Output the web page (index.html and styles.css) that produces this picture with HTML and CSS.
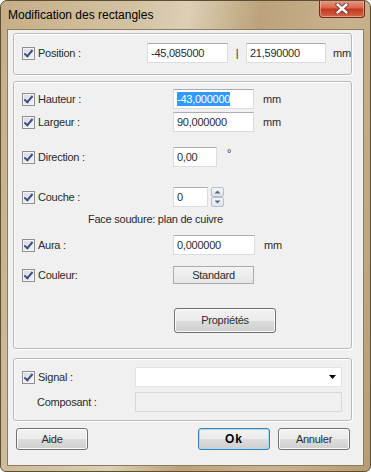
FILE: index.html
```html
<!DOCTYPE html>
<html lang="fr">
<head>
  <meta charset="UTF-8">
  <title>Modification des rectangles</title>
  <link rel="stylesheet" href="styles.css">
</head>
<body>
  <div class="window">
    <div class="titlebar">
      <span class="title">Modification des rectangles</span>
      <div class="close">
        <svg width="14" height="11" viewBox="0 0 14 11">
          <path d="M2.5 1.5 L11.5 9.5 M11.5 1.5 L2.5 9.5" stroke="#6b3326" stroke-width="4.2" stroke-linecap="round"/>
          <path d="M2.5 1.5 L11.5 9.5 M11.5 1.5 L2.5 9.5" stroke="#fff" stroke-width="2.4" stroke-linecap="round"/>
        </svg>
      </div>
    </div>

    <div class="client">
      <!-- position -->
      <div class="group group-pos">
        <div class="row row-pos">
          <span class="lab lab-pos"><span class="chk"></span>Position :</span>
          <span class="field w-81">-45,085000</span>
          <span class="sep">|</span>
          <span class="field w-80">21,590000</span>
          <span class="unit unit-pos">mm</span>
        </div>
      </div>

      <!-- dimensions -->
      <div class="group group-dim">
        <div class="row mt-7">
          <span class="lab"><span class="chk"></span>Hauteur :</span>
          <span class="field w-81"><span class="sel">-43,000000</span></span>
          <span class="unit">mm</span>
        </div>
        <div class="row mt-3">
          <span class="lab"><span class="chk"></span>Largeur :</span>
          <span class="field w-81">90,000000</span>
          <span class="unit">mm</span>
        </div>
        <div class="row mt-15">
          <span class="lab"><span class="chk"></span>Direction :</span>
          <span class="field w-44">0,00</span>
          <span class="unit unit-deg">°</span>
        </div>
        <div class="row mt-20">
          <span class="lab"><span class="chk"></span>Couche :</span>
          <span class="field w-35">0</span>
          <span class="spin">
            <span class="spin-btn"><svg width="7" height="4" viewBox="0 0 7 4"><path d="M0.5 3.5 L3.5 0.5 L6.5 3.5Z" fill="#5a6782"/></svg></span>
            <span class="spin-btn"><svg width="7" height="4" viewBox="0 0 7 4"><path d="M0.5 0.5 L3.5 3.5 L6.5 0.5Z" fill="#5a6782"/></svg></span>
          </span>
        </div>
        <div class="note">Face soudure: plan de cuivre</div>
        <div class="row mt-10">
          <span class="lab"><span class="chk"></span>Aura :</span>
          <span class="field w-82">0,000000</span>
          <span class="unit">mm</span>
        </div>
        <div class="row mt-10">
          <span class="lab"><span class="chk"></span>Couleur:</span>
          <span class="flat-btn">Standard</span>
        </div>
        <div class="row-btn">
          <span class="btn btn-props">Propriétés</span>
        </div>
      </div>

      <!-- signal -->
      <div class="group group-sig">
        <div class="row mt-8">
          <span class="lab lab-sig"><span class="chk"></span>Signal :</span>
          <span class="combo">
            <svg width="7" height="4" viewBox="0 0 7 4"><path d="M0 0 L7 0 L3.5 4Z" fill="#000"/></svg>
          </span>
        </div>
        <div class="row mt-5">
          <span class="lab lab-sig lab-plain">Composant :</span>
          <span class="field field-off w-207"></span>
        </div>
      </div>

      <div class="actions">
        <span class="btn">Aide</span>
        <span class="btn btn-ok">Ok</span>
        <span class="btn">Annuler</span>
      </div>
    </div>
  </div>
</body>
</html>
```

FILE: styles.css
```css
* {
  box-sizing: border-box;
}

body {
  margin: 0;
  background: #fff;
  font-family: "Liberation Sans", Arial, sans-serif;
  font-size: 11px;
  letter-spacing: -0.25px;
  color: #2b2b2b;
}

.window {
  width: 371px;
  height: 472px;
  border: 1px solid #5d4d36;
  border-radius: 7px 7px 6px 6px;
  background: linear-gradient(100deg, #c6ae87 0%, #d3c3a3 30%, #dccfb4 42%, #bba27a 58%, #c9b38e 78%, #b69c72 100%);
  display: flex;
  flex-direction: column;
  overflow: hidden;
}

.titlebar {
  height: 28px;
  display: flex;
  align-items: flex-start;
}

.title {
  font-size: 12px;
  line-height: 14px;
  letter-spacing: 0;
  color: #000;
  margin: 7px 0 0 7px;
}

.close {
  margin-left: auto;
  margin-right: 5px;
  width: 46px;
  height: 18px;
  margin-top: -1px;
  border: 1px solid #6e2a1d;
  border-top: none;
  border-radius: 0 0 4px 4px;
  background: linear-gradient(#e9a08e, #d8664c 45%, #c2391f 55%, #d5654a);
  box-shadow: inset 0 0 0 1px rgba(255, 210, 190, 0.5);
  display: flex;
  align-items: center;
  justify-content: center;
}

.client {
  margin: 0 6px;
  height: 437px;
  border: 1px solid #8d7d60;
  background: #f0f0f0;
  display: flex;
  flex-direction: column;
}

.group {
  margin: 0 11px 0 5px;
  border: 1px solid #b9b9b9;
  border-radius: 3px;
  box-shadow: 1px 1px 0 #fff, inset 1px 1px 0 #fff;
}

.group-pos {
  margin-top: 3px;
  height: 42px;
}

.group-dim {
  margin-top: 6px;
  height: 268px;
}

.group-sig {
  margin-top: 9px;
  height: 63px;
}

.row {
  display: flex;
  align-items: center;
  height: 20px;
  padding-left: 8px;
}

.row-pos {
  margin-top: 9px;
}

.mt-3 { margin-top: 3px; }
.mt-5 { margin-top: 5px; }
.mt-7 { margin-top: 7px; }
.mt-8 { margin-top: 8px; }
.mt-10 { margin-top: 10px; }
.mt-15 { margin-top: 15px; }
.mt-20 { margin-top: 20px; }

.lab {
  display: flex;
  align-items: center;
  gap: 3px;
  width: 151px;
  flex-shrink: 0;
}

.lab-pos {
  width: 125px;
}

.lab-sig {
  width: 113px;
}

.lab-plain {
  padding-left: 15px;
}

.chk {
  width: 13px;
  height: 13px;
  border: 1px solid #8e8f8f;
  background: linear-gradient(135deg, #d4d8e0, #f6f7f9) padding-box;
  box-shadow: inset 0 0 0 1px #f3f3f3;
  position: relative;
}

.chk::after {
  content: "";
  position: absolute;
  left: 3px;
  top: 0px;
  width: 3px;
  height: 7px;
  border: solid #3e4f82;
  border-width: 0 2px 2px 0;
  transform: rotate(40deg);
}

.field {
  height: 20px;
  background: #fff;
  border: 1px solid #dadcdf;
  border-top-color: #abadb3;
  padding: 0 0 0 3px;
  line-height: 18px;
  white-space: nowrap;
}

.field-off {
  background: #f0f0f0;
  border-color: #d9d9d9;
}

.w-35 { width: 35px; }
.w-44 { width: 44px; }
.w-80 { width: 80px; }
.w-81 { width: 81px; }
.w-82 { width: 82px; }
.w-207 { width: 207px; }

.sel {
  background: #3399ff;
  color: #fff;
  padding: 1px 0;
}

.sep {
  width: 18px;
  text-align: center;
}

.unit {
  margin-left: 9px;
}

.unit-pos {
  margin-left: 7px;
}

.unit-deg {
  margin-left: 10px;
  align-self: flex-start;
  line-height: 12px;
}

.spin {
  margin-left: 3px;
  display: flex;
  flex-direction: column;
}

.spin-btn {
  width: 13px;
  height: 10px;
  border: 1px solid #b7bdcb;
  border-radius: 2px;
  background: linear-gradient(#f5f6f8, #dfe3ea);
  display: flex;
  align-items: center;
  justify-content: center;
}

.note {
  margin-top: 6px;
  height: 12px;
  line-height: 12px;
  padding-left: 74px;
}

.flat-btn {
  width: 81px;
  height: 18px;
  border: 1px solid #acacac;
  background: linear-gradient(#f3f3f3, #e6e6e6);
  text-align: center;
  line-height: 16px;
}

.row-btn {
  margin-top: 23px;
  padding-left: 160px;
}

.btn {
  display: inline-block;
  width: 72px;
  height: 22px;
  border: 1px solid #707070;
  border-radius: 3px;
  background: linear-gradient(#f2f2f2, #ebebeb 50%, #dddddd 50%, #cfcfcf);
  box-shadow: inset 0 0 0 1px #fbfbfb;
  text-align: center;
  line-height: 20px;
}

.btn-props {
  width: 102px;
  height: 25px;
  line-height: 23px;
}

.btn-ok {
  border-color: #3c7fb1;
  box-shadow: inset 0 0 0 1px #a6dcf6;
  font-weight: bold;
  font-size: 12px;
  letter-spacing: 1px;
  color: #000;
}

.combo {
  width: 207px;
  height: 20px;
  background: #fff;
  border: 1px solid #e2e3e5;
  display: flex;
  align-items: center;
  justify-content: flex-end;
  padding-right: 5px;
}

.actions {
  margin-top: 7px;
  padding: 0 13px 0 8px;
  display: flex;
  gap: 8px;
}

.actions .btn:first-child {
  margin-right: auto;
}
```
